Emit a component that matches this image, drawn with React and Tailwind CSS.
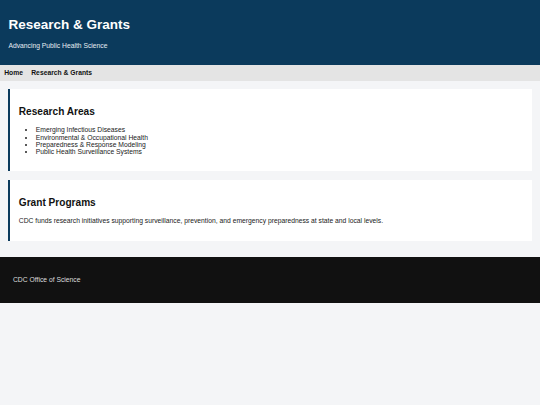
export default function App() {
  const areas = [
    "Emerging Infectious Diseases",
    "Environmental & Occupational Health",
    "Preparedness & Response Modeling",
    "Public Health Surveillance Systems",
  ];
  return (
    <div
      className="min-h-[405px] bg-[#f4f5f7] text-[#111]"
      style={{ fontFamily: '"Liberation Sans", Arial, sans-serif' }}
    >
      <header className="bg-[#0b3a5c] pl-[8.4px] pt-[17.4px] pb-[15.2px] text-white">
        <h1 className="text-[13.5px] leading-[15.5px] font-bold">Research &amp; Grants</h1>
        <p className="mt-[9px] text-[6.75px] leading-[7.76px] text-[#e6edf3]">
          Advancing Public Health Science
        </p>
      </header>

      <nav className="flex h-[15.7px] items-center gap-[8.3px] bg-[#e4e4e4] px-[4.2px] text-[6.75px] font-bold text-[#111]">
        <span>Home</span>
        <span>Research &amp; Grants</span>
      </nav>

      <main className="flex flex-col gap-[8.4px] px-[8.4px] pt-[8.4px] pb-[16.8px]">
        <section className="border-l-[2.25px] border-[#0b3a5c] bg-white pl-[8.4px] pt-[17.4px] pb-[15.8px]">
          <h2 className="text-[10.125px] leading-[11.6px] font-bold">Research Areas</h2>
          <ul className="mt-[8.4px] list-disc pl-[17px] text-[6.75px] leading-[7.35px] text-[#222]">
            {areas.map((a) => (
              <li key={a}>{a}</li>
            ))}
          </ul>
        </section>

        <section className="border-l-[2.25px] border-[#0b3a5c] bg-white pl-[8.4px] pt-[17.4px] pb-[15.5px]">
          <h2 className="text-[10.125px] leading-[11.6px] font-bold">Grant Programs</h2>
          <p className="mt-[8.4px] text-[6.75px] leading-[7.76px] text-[#222]">
            CDC funds research initiatives supporting surveillance, prevention, and emergency
            preparedness at state and local levels.
          </p>
        </section>
      </main>

      <footer className="flex h-[45.4px] items-center bg-[#111] pl-[13px] text-[6.75px] text-[#ddd]">
        CDC Office of Science
      </footer>
    </div>
  );
}
